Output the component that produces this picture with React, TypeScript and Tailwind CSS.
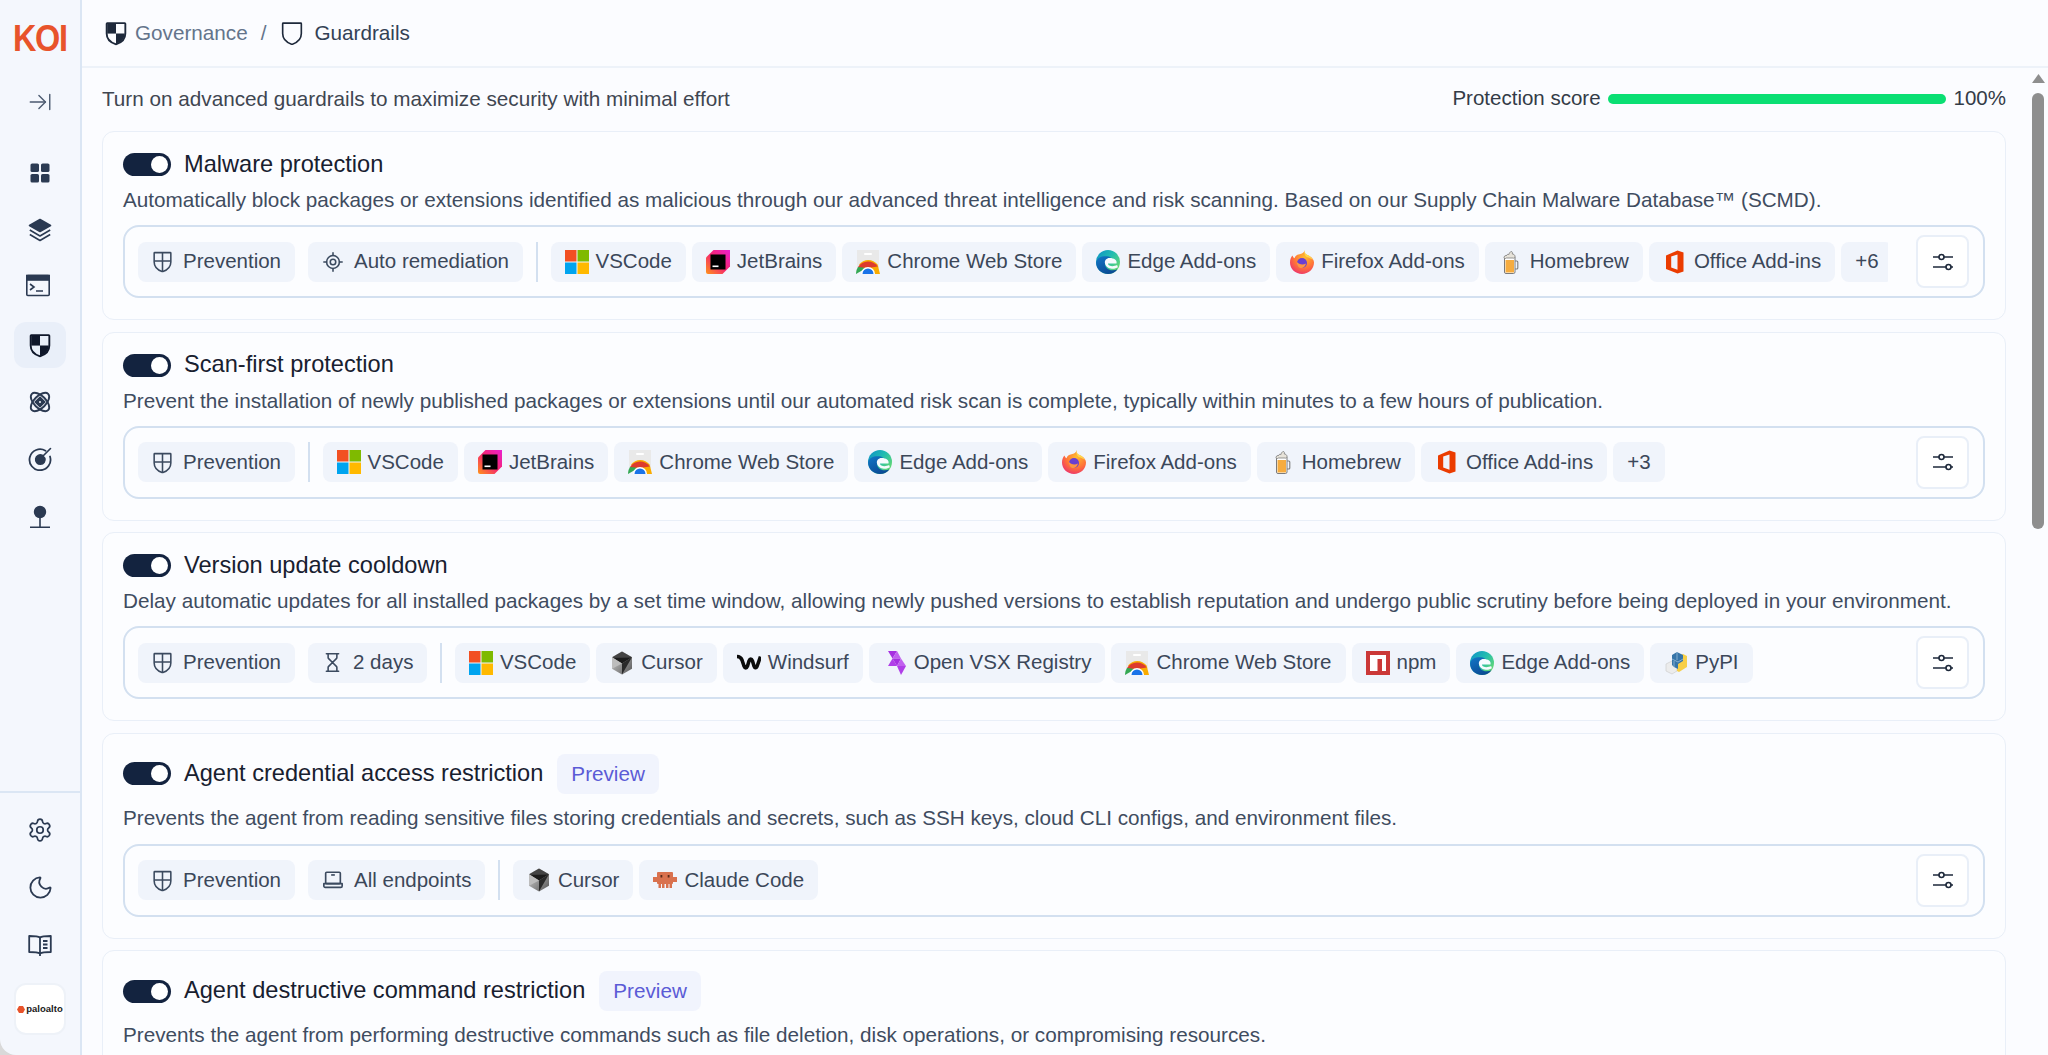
import { ReactNode } from "react";
import { ArrowRightToLine, Settings, Moon, Hourglass, LocateFixed } from "lucide-react";

const SHIELD = "M4.5 3.5h15a.5.5 0 0 1 .5.5v8.5c0 5-3.4 7.7-7.6 9.1a1.2 1.2 0 0 1-.8 0C7.4 20.2 4 17.5 4 12.5V4a.5.5 0 0 1 .5-.5z";

function ShieldHalf({ size = 22, color = "#0f172a" }: { size?: number; color?: string }) {
  return (
    <svg width={size} height={size} viewBox="0 0 24 24" fill="none">
      <path d={SHIELD} stroke={color} strokeWidth="1.6" />
      <path d="M4.5 4H12v8.500H4.500z" fill={color} />
      <path d="M12 12.500h7.500c0 5-3.500 7.500-7.500 9z" fill={color} />
    </svg>
  );
}
function ShieldOutline() {
  return (
    <svg width={28} height={28} viewBox="0 0 24 24" fill="none">
      <path d={SHIELD} stroke="#1e293b" strokeWidth="1.400" />
    </svg>
  );
}
function ShieldCross() {
  return (
    <svg width={25} height={25} viewBox="0 0 24 24" fill="none" stroke="#3b4a5f" strokeWidth="1.500" className="-mx-[2px]">
      <path d={SHIELD} />
      <path d="M12 3.500v18.500M4 11.500h16" />
    </svg>
  );
}
function LaptopIcon() {
  return (
    <svg width={22} height={22} viewBox="0 0 24 24" fill="none" stroke="#3b4a5f" strokeWidth="1.800" strokeLinejoin="round">
      <rect x="4" y="3.500" width="16" height="12.500" rx="1.200" />
      <path d="M2 16h20v2.500a1.500 1.500 0 0 1-1.500 1.500h-17A1.500 1.500 0 0 1 2 18.500z" />
      <path d="M10 6.500h4" />
    </svg>
  );
}
function Sliders() {
  return (
    <svg width={24} height={24} viewBox="0 0 24 24" fill="none" stroke="#1e293b" strokeWidth="1.600">
      <path d="M2 7h6M13 7h9M2 17h13M20 17h2" />
      <circle cx="10.500" cy="7" r="2.500" />
      <circle cx="17.500" cy="17" r="2.500" />
    </svg>
  );
}

function GridIcon() {
  return (
    <svg width={20} height={20} viewBox="0 0 20 20" fill="#2b3a52">
      <rect x="0.500" y="0.500" width="8.500" height="8.500" rx="1.600" />
      <rect x="11" y="0.500" width="8.500" height="8.500" rx="1.600" />
      <rect x="0.500" y="11" width="8.500" height="8.500" rx="1.600" />
      <rect x="11" y="11" width="8.500" height="8.500" rx="1.600" />
    </svg>
  );
}
function LayersIcon() {
  return (
    <svg width={24} height={24} viewBox="0 0 24 24" fill="none" stroke="#2b3a52" strokeWidth="1.600" strokeLinejoin="round">
      <path d="M12 1.500 22.500 7.500 12 13.500 1.500 7.500z" fill="#2b3a52" />
      <path d="M1.800 12 12 18l10.200-6M1.800 16.500 12 22.500l10.200-6" />
    </svg>
  );
}
function TerminalIcon() {
  return (
    <svg width={24} height={24} viewBox="0 0 24 24" fill="none" stroke="#2b3a52" strokeWidth="1.600" className="-translate-x-[2px] -translate-y-[2px]">
      <rect x="0.800" y="1.500" width="22.400" height="20" rx="1" />
      <rect x="0.800" y="1.500" width="22.400" height="4.500" fill="#2b3a52" />
      <path d="m4 10 4 3-4 3M10 17h7" />
    </svg>
  );
}
function AtomIcon() {
  return (
    <svg width={24} height={24} viewBox="0 0 24 24" fill="none" stroke="#2b3a52" strokeWidth="1.900">
      <ellipse cx="12" cy="12" rx="6" ry="11.500" transform="rotate(45 12 12)" />
      <ellipse cx="12" cy="12" rx="6" ry="11.500" transform="rotate(-45 12 12)" />
      <path d="M12 7.500 16.500 12 12 16.500 7.500 12z" fill="#2b3a52" />
      <circle cx="12" cy="12" r="1" fill="#f4f7fd" stroke="none" />
    </svg>
  );
}
function TargetIcon() {
  return (
    <svg width={24} height={24} viewBox="0 0 24 24" fill="none" stroke="#2b3a52" strokeWidth="1.800" strokeLinecap="round">
      <path d="M17.500 3.800A10.500 10.500 0 1 0 22 9.500" />
      <path d="M14.600 7.500a5.500 5.500 0 1 0 3 3.400" fill="#2b3a52" stroke="none" />
      <path d="M10.500 13.500 22.500 1.500" strokeWidth="1.600" />
    </svg>
  );
}
function PinIcon() {
  return (
    <svg width={24} height={24} viewBox="0 0 24 24" fill="none" stroke="#2b3a52" strokeWidth="1.600">
      <circle cx="12" cy="7" r="5.400" fill="#2b3a52" />
      <path d="M12 12v10M2 22.200h20" />
    </svg>
  );
}
function BookIcon() {
  return (
    <svg width={24} height={24} viewBox="0 0 24 24" fill="none" stroke="#2b3a52" strokeWidth="1.800" strokeLinejoin="round">
      <path d="M12 4.500C10 3 6 3 1.200 3v16c5 0 8.500 0 10.800 1.500C14.300 19 18 19 22.800 19V3C18 3 14 3 12 4.500z" />
      <path d="M12 4.500V23M15 8h4.500M15 11.500h4.500M15 15h4.500" />
    </svg>
  );
}

function MsIcon() {
  return (
    <svg width={24} height={24} viewBox="0 0 24 24">
      <rect width="11.500" height="11.500" fill="#f25022" />
      <rect x="12.500" width="11.500" height="11.500" fill="#7fba00" />
      <rect y="12.500" width="11.500" height="11.500" fill="#00a4ef" />
      <rect x="12.500" y="12.500" width="11.500" height="11.500" fill="#ffb900" />
    </svg>
  );
}
function JetBrainsIcon() {
  return (
    <svg width={24} height={24} viewBox="0 0 24 24">
      <defs>
        <linearGradient id="jb" x1="0" y1="1" x2="1" y2="0">
          <stop offset="0" stopColor="#ff9419" />
          <stop offset="0.500" stopColor="#f5256e" />
          <stop offset="1" stopColor="#e91fd0" />
        </linearGradient>
      </defs>
      <path d="M7.500 0H24v16.500L16.500 24H2a2 2 0 0 1-2-2V7.500z" fill="url(#jb)" />
      <rect x="4.500" y="4.500" width="15" height="15" fill="#000" />
      <rect x="6.500" y="15.500" width="6" height="1.600" fill="#fff" />
    </svg>
  );
}
function ChromeIcon() {
  return (
    <svg width={24} height={24} viewBox="0 0 24 24">
      <rect x="1" y="0" width="22" height="18" fill="#e9e9e9" />
      <rect x="8" y="3" width="8" height="2" rx="1" fill="#fff" />
      <path d="M0 24a12 12 0 0 1 2-7h10z" fill="#34a853" />
      <path d="M3 14.500a12 12 0 0 1 18.600 0l2.400 9.500h-5z" fill="#f9ab00" />
      <path d="M2 17A12 12 0 0 1 21.800 16.500L12 18z" fill="#dd3b2d" />
      <circle cx="12" cy="24" r="7" fill="#fff" />
      <circle cx="12" cy="24" r="5.500" fill="#1a73e8" />
    </svg>
  );
}
function EdgeIcon() {
  return (
    <svg width={24} height={24} viewBox="0 0 24 24">
      <defs>
        <linearGradient id="eg" x1="0" y1="0" x2="1" y2="0.800">
          <stop offset="0" stopColor="#0c8fc9" />
          <stop offset="0.500" stopColor="#22bdb0" />
          <stop offset="1" stopColor="#6cdb6b" />
        </linearGradient>
        <linearGradient id="eb" x1="0" y1="0" x2="0.600" y2="1">
          <stop offset="0" stopColor="#1277c7" />
          <stop offset="1" stopColor="#0a4a94" />
        </linearGradient>
      </defs>
      <circle cx="12" cy="12" r="12" fill="url(#eg)" />
      <path d="M0.100 12.500C0 19 5.500 24 12 24c4 0 7.500-1.800 9.500-4.800-2.500 1.200-5.800 1.600-8.500.2-3-1.500-4.600-4.200-3.800-7C10.500 9 13 7.500 15.500 7.500 10 5 1 6 .1 12.500z" fill="url(#eb)" />
      <path d="M13.500 8c-3 0-5 2.500-4.600 5 .5 3.200 3.500 5.500 7 5.800 2.500.2 4.600-.7 6-1.600l-.8-2.200c-2 1.200-5.600 1.600-7.600.6-.9-.4-1.500-1.200-1.500-2h8.500c1-3.500-2.500-5.600-7-5.600z" fill="#f6fbff" />
    </svg>
  );
}
function FirefoxIcon() {
  return (
    <svg width={24} height={24} viewBox="0 0 24 24">
      <defs>
        <radialGradient id="ff" cx="0.600" cy="0.300" r="0.900">
          <stop offset="0" stopColor="#ffbd2e" />
          <stop offset="0.500" stopColor="#ff7139" />
          <stop offset="1" stopColor="#e31587" />
        </radialGradient>
      </defs>
      <path d="M15 0c-1 2.500 0 4 2.500 5 4 1.500 6.500 4.500 6.500 7.500C24 19 18.500 24 12 24S0 19 0 12.500C0 9.500 1 7 2.500 5.500 3 7 3.500 7.800 4.500 8.300 5 6 7 4.500 9.500 4.200 12 3.800 14 2.500 15 0z" fill="url(#ff)" />
      <path d="M15 0c-.8 2.500.2 4 2.500 5 2.500 1 4 2.500 5.500 5-2-1.500-4-2.500-6-2.800C14 5 13.800 2.500 15 0z" fill="#ffd84a" />
      <circle cx="12" cy="13" r="5" fill="#6a3fd1" />
      <path d="M7 12c1.500 2 5.500 3.500 9 1.500-.5 3-3 5-5.500 4.500C8 17.500 6.500 14.500 7 12z" fill="#ff9640" />
    </svg>
  );
}
function BrewIcon() {
  return (
    <svg width={24} height={24} viewBox="0 0 24 24">
      <rect x="5.500" y="6" width="10.500" height="17.500" rx="1.500" fill="#fff" stroke="#6b6b6b" strokeWidth="0.900" />
      <rect x="6.500" y="10" width="8.500" height="12.500" fill="#f6ac3f" />
      <path d="M16 11h1.800a1 1 0 0 1 1 1v6a1 1 0 0 1-1 1H16" fill="none" stroke="#7c7c7c" strokeWidth="1.100" />
      <path d="M5 7.500c0-1.500 1.500-2 2.500-2 .3-1 1.500-1.500 2.500-1 .3-1.200 1-3 2.500-3 1 .3 1 1.500.8 2.500 1.200 0 2.700.8 2.700 2.500 0 1.200-1 2-2 1.500H7.500C6 9 5 8.500 5 7.500z" fill="#e7e3da" stroke="#6b6b6b" strokeWidth="0.700" />
    </svg>
  );
}
function OfficeIcon() {
  return (
    <svg width={24} height={24} viewBox="0 0 24 24">
      <path d="M3 5.500 14.500 0.500 20.500 2.500V21.500L14.500 23.500 3 19V5.500zM14.500 4.500 8.200 6.500V17.500L14.500 19.800z" fill="#eb3c00" fillRule="evenodd" />
    </svg>
  );
}
function CursorIcon() {
  return (
    <svg width={24} height={24} viewBox="0 0 24 24">
      <defs>
        <linearGradient id="cs" x1="0" y1="0" x2="1" y2="1">
          <stop offset="0" stopColor="#d8d8d8" />
          <stop offset="1" stopColor="#555" />
        </linearGradient>
      </defs>
      <polygon points="12,0.500 22,6.200 22,17.800 12,23.500 2,17.800 2,6.200" fill="url(#cs)" />
      <polygon points="12,0.500 22,6.200 12,6.200 2,6.200" fill="#444" />
      <polygon points="2,6.200 22,6.200 12,12.500" fill="#1c1c1c" />
      <polygon points="22,6.200 12,12.500 12,23.500" fill="#2a2a2a" />
      <polygon points="2,6.200 12,12.500 2,17.800" fill="#bdbdbd" />
    </svg>
  );
}
function WindsurfIcon() {
  return (
    <svg width={24} height={24} viewBox="0 0 24 24" fill="none" stroke="#0b0b0b" strokeWidth="3.600" strokeLinejoin="round">
      <path d="M0 5.500c3 0 4 1 5 3.500l2 6c1 2.500 2.500 2.500 3.500 0l1.500-5c1-2.500 2.500-2.500 3.500 0l1.500 5c.8 2 2 2.500 3 .5L23.500 5.500" />
    </svg>
  );
}
function VsxIcon() {
  return (
    <svg width={24} height={24} viewBox="0 0 24 24">
      <polygon points="5,0 14,0 9.500,7.500" fill="#a62fe0" />
      <polygon points="9.500,7.500 18,7.500 14,0" fill="#c160ef" />
      <polygon points="5,15 9.500,7.500 14,15" fill="#b03ee8" />
      <polygon points="9.500,7.500 18,7.500 14,15" fill="#a62fe0" />
      <polygon points="14,15 18,7.500 23,15" fill="#c160ef" />
      <polygon points="14,15 23,15 18,24" fill="#b03ee8" />
    </svg>
  );
}
function NpmIcon() {
  return (
    <svg width={24} height={24} viewBox="0 0 24 24">
      <rect width="24" height="24" fill="#cb3837" />
      <rect x="4" y="4" width="16" height="16" fill="#fff" />
      <rect x="11.500" y="8" width="4.500" height="12" fill="#cb3837" />
    </svg>
  );
}
function PyIcon() {
  return (
    <svg width={24} height={24} viewBox="0 0 24 24">
      <polygon points="2,13 8,10 13,13 13,20 8,23 2,20" fill="#ececec" stroke="#cfcfcf" strokeWidth="0.700" />
      <polygon points="14,5 19,3 23,5 23,16 15,21 13,20 13,12" fill="#f7cf47" />
      <polygon points="8,4 13,1 19,4 19,10 14,13 14,18 10,16 8,14" fill="#3775a9" />
      <path d="M13 1v8M8 8l6 3 5-3M10 16V10" stroke="#a7c6e0" strokeWidth="0.700" fill="none" />
    </svg>
  );
}
function ClaudeIcon() {
  return (
    <svg width={24} height={24} viewBox="0 0 24 24" fill="#d9714e">
      <rect x="4" y="4" width="16" height="12" rx="1" />
      <rect x="0" y="9" width="24" height="5" />
      <rect x="5.500" y="16" width="2.500" height="4" />
      <rect x="9" y="16" width="2.500" height="4" />
      <rect x="13" y="16" width="2.500" height="4" />
      <rect x="16.500" y="16" width="2.500" height="4" />
      <rect x="7.500" y="7" width="1.800" height="2.500" fill="#5b2a1a" />
      <rect x="14.700" y="7" width="1.800" height="2.500" fill="#5b2a1a" />
    </svg>
  );
}

type TagDef = { icon?: ReactNode; label: string };

const P: TagDef = { icon: <ShieldCross />, label: "Prevention" };
const VS: TagDef = { icon: <MsIcon />, label: "VSCode" };
const JB: TagDef = { icon: <JetBrainsIcon />, label: "JetBrains" };
const CH: TagDef = { icon: <ChromeIcon />, label: "Chrome Web Store" };
const ED: TagDef = { icon: <EdgeIcon />, label: "Edge Add-ons" };
const FF: TagDef = { icon: <FirefoxIcon />, label: "Firefox Add-ons" };
const HB: TagDef = { icon: <BrewIcon />, label: "Homebrew" };
const OF: TagDef = { icon: <OfficeIcon />, label: "Office Add-ins" };
const CU: TagDef = { icon: <CursorIcon />, label: "Cursor" };

function Tag({ tag, meta }: { tag: TagDef; meta?: boolean }) {
  return (
    <div
      className={
        "flex h-10 shrink-0 items-center whitespace-nowrap rounded-lg bg-[#f0f4fb] text-[20.5px] text-[#3b4759] " +
        (meta ? "gap-[10px] px-[14px]" : "gap-[7px] px-[14px]")
      }
    >
      {tag.icon}
      <span>{tag.label}</span>
    </div>
  );
}

function Card({
  title,
  desc,
  preview,
  meta,
  tags,
  noRow,
}: {
  title: string;
  desc: string;
  preview?: boolean;
  meta?: TagDef[];
  tags?: TagDef[];
  noRow?: boolean;
}) {
  return (
    <div className="shrink-0 rounded-xl border-[1.5px] border-[#e9eff8] bg-[#fcfdff] px-[20px] pt-[20px] pb-[21px]">
      <div className={"flex items-center gap-[13px] " + (preview ? "h-10" : "h-[25px]")}>
        <div className="flex h-[23px] w-12 items-center justify-end rounded-full bg-[#13233f] pr-[3px]">
          <div className="h-[17px] w-[17px] rounded-full bg-white" />
        </div>
        <span className="text-[23.600px] leading-none text-[#18202f]">{title}</span>
        {preview && (
          <span className="ml-[1px] flex h-10 items-center rounded-lg bg-[#f1f4fd] px-[14px] text-[20.700px] text-[#5b5bd6]">
            Preview
          </span>
        )}
      </div>
      <p className={"text-[20.700px] leading-[26px] text-[#3f4c60] " + (preview ? "mt-[11px]" : "mt-[10px]")}>{desc}</p>
      {!noRow && (
        <div className={"flex h-[73px] items-center rounded-2xl border-2 border-[#d3e0f0] pl-[13px] pr-[14px] " + (preview ? "mt-[13px]" : "mt-[12px]")}>
          <div className="flex min-w-0 flex-1 items-center overflow-hidden">
            <div className="flex shrink-0 items-center gap-[13px]">
              {meta?.map((t) => (
                <Tag key={t.label} tag={t} meta />
              ))}
            </div>
            <div className="mx-[13px] h-10 w-[1.500px] shrink-0 bg-[#d3e0f0]" />
            <div className="flex items-center gap-[6px]">
              {tags?.map((t) => (
                <Tag key={t.label} tag={t} />
              ))}
            </div>
          </div>
          <div className="ml-[28px] flex h-[53px] w-[53px] shrink-0 items-center justify-center rounded-lg border-2 border-[#e9eff8] bg-white">
            <Sliders />
          </div>
        </div>
      )}
    </div>
  );
}

function NavItem({ children, active }: { children: ReactNode; active?: boolean }) {
  return (
    <div
      className={
        "flex h-[46px] w-[52px] items-center justify-center rounded-xl " + (active ? "bg-[#e9eff9]" : "")
      }
    >
      {children}
    </div>
  );
}

export default function App() {
  return (
    <div className="flex h-[1055px] w-full overflow-hidden bg-[#d9d9d9] font-['Liberation_Sans',sans-serif]">
      <aside className="flex w-[82px] shrink-0 flex-col items-center rounded-bl-2xl border-r-2 border-[#dbe6f4] bg-[#f4f7fd]">
        <div className="mt-[21px] scale-x-90 text-[36px] font-bold leading-[36px] tracking-[-0.04em] text-[#e8532b]">KOI</div>
        <div className="mt-[27px] flex h-[36px] items-center justify-center">
          <ArrowRightToLine size={26} strokeWidth={1.300} color="#4b5a70" />
        </div>
        <div className="mt-[30px] flex flex-col items-center gap-[11.300px]">
          <NavItem><GridIcon /></NavItem>
          <NavItem><LayersIcon /></NavItem>
          <NavItem><TerminalIcon /></NavItem>
          <NavItem active><ShieldHalf size={28} /></NavItem>
          <NavItem><AtomIcon /></NavItem>
          <NavItem><TargetIcon /></NavItem>
          <NavItem><PinIcon /></NavItem>
        </div>
        <div className="mt-auto flex w-full flex-col items-center border-t-2 border-[#dbe6f4] pt-[14px] pb-[20px]">
          <div className="flex flex-col items-center gap-[11.500px]">
            <NavItem><Settings size={26} strokeWidth={1.600} color="#2b3a52" /></NavItem>
            <NavItem><Moon size={27} strokeWidth={1.600} color="#2b3a52" /></NavItem>
            <NavItem><BookIcon /></NavItem>
          </div>
          <div className="mt-[15px] flex h-[52px] w-[52px] items-center justify-center gap-[1px] rounded-xl border-2 border-[#eef2f8] bg-white">
            <svg width={8} height={7} viewBox="0 0 8 7">
              <polygon points="2,0 6,0 8,3.500 6,7 2,7 0,3.500" fill="#e8532b" />
            </svg>
            <span className="text-[9.500px] font-bold leading-none text-[#1a1a1a]">paloalto</span>
          </div>
        </div>
      </aside>
      <div className="flex min-w-0 flex-1 flex-col bg-[#fbfcff]">
        <header className="flex h-[68px] shrink-0 items-center border-b-2 border-[#edf2f9] pl-[20px] text-[20.700px]">
          <ShieldHalf size={28} color="#1e293b" />
          <span className="ml-[5px] text-[#64748b]">Governance</span>
          <span className="ml-[13px] text-[#64748b]">/</span>
          <span className="ml-[12px]"><ShieldOutline /></span>
          <span className="ml-[8px] text-[#334155]">Guardrails</span>
        </header>
        <div className="flex min-h-0 flex-1">
          <main className="flex min-w-0 flex-1 flex-col overflow-hidden pl-[20px] pr-[24px]">
            <div className="flex h-[63px] shrink-0 items-center justify-between pb-[2px] text-[20.700px]">
              <span className="text-[#3f4651]">Turn on advanced guardrails to maximize security with minimal effort</span>
              <div className="flex items-center text-[20.500px] text-[#333b47]">
                <span>Protection score</span>
                <div className="ml-[7px] h-[10px] w-[338px] rounded-full bg-[#0adf73]" />
                <span className="ml-[8px]">100%</span>
              </div>
            </div>
            <div className="flex flex-col gap-[11.500px]">
              <Card
                title="Malware protection"
                desc="Automatically block packages or extensions identified as malicious through our advanced threat intelligence and risk scanning. Based on our Supply Chain Malware Database™ (SCMD)."
                meta={[P, { icon: <LocateFixed size={22} strokeWidth={1.700} color="#3b4a5f" />, label: "Auto remediation" }]}
                tags={[VS, JB, CH, ED, FF, HB, OF, { label: "+6" }]}
              />
              <Card
                title="Scan-first protection"
                desc="Prevent the installation of newly published packages or extensions until our automated risk scan is complete, typically within minutes to a few hours of publication."
                meta={[P]}
                tags={[VS, JB, CH, ED, FF, HB, OF, { label: "+3" }]}
              />
              <Card
                title="Version update cooldown"
                desc="Delay automatic updates for all installed packages by a set time window, allowing newly pushed versions to establish reputation and undergo public scrutiny before being deployed in your environment."
                meta={[P, { icon: <Hourglass size={21} strokeWidth={1.800} color="#3b4a5f" />, label: "2 days" }]}
                tags={[
                  VS,
                  CU,
                  { icon: <WindsurfIcon />, label: "Windsurf" },
                  { icon: <VsxIcon />, label: "Open VSX Registry" },
                  CH,
                  { icon: <NpmIcon />, label: "npm" },
                  ED,
                  { icon: <PyIcon />, label: "PyPI" },
                ]}
              />
              <Card
                preview
                title="Agent credential access restriction"
                desc="Prevents the agent from reading sensitive files storing credentials and secrets, such as SSH keys, cloud CLI configs, and environment files."
                meta={[P, { icon: <LaptopIcon />, label: "All endpoints" }]}
                tags={[CU, { icon: <ClaudeIcon />, label: "Claude Code" }]}
              />
              <Card
                preview
                noRow
                title="Agent destructive command restriction"
                desc="Prevents the agent from performing destructive commands such as file deletion, disk operations, or compromising resources."
              />
            </div>
          </main>
          <div className="flex w-[18px] shrink-0 flex-col items-center pt-[6px] pr-[2px]">
            <svg width={13} height={9} viewBox="0 0 13 9"><polygon points="6.500,0 13,9 0,9" fill="#8e8e8e" /></svg>
            <div className="mt-[10px] h-[436px] w-[12px] rounded-full bg-[#8e8e8e]" />
          </div>
        </div>
      </div>
    </div>
  );
}
